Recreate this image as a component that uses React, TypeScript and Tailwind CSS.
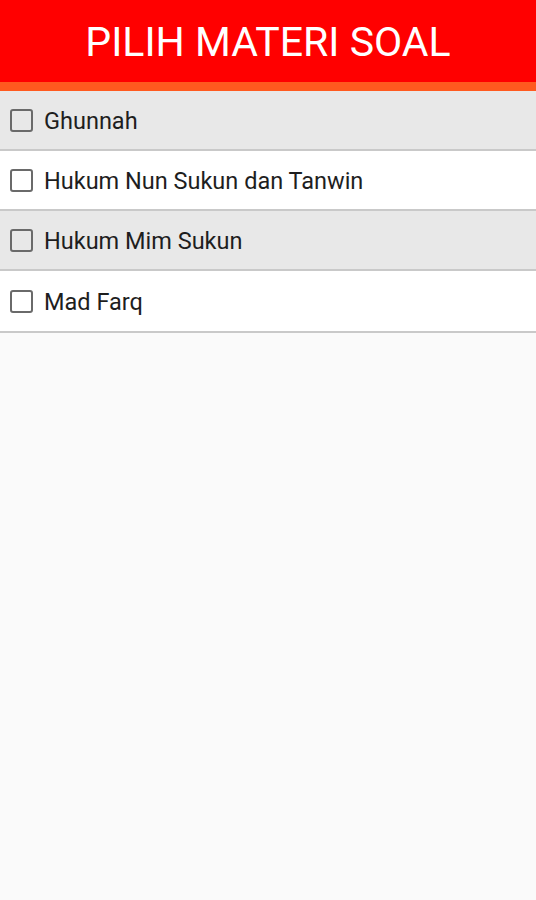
const TOPICS = ['Ghunnah', 'Hukum Nun Sukun dan Tanwin', 'Hukum Mim Sukun', 'Mad Farq'];

export default function App() {
  return (
    <div className="min-h-[900px] bg-[#fafafa]" style={{ fontFamily: 'Roboto, "Noto Sans", sans-serif' }}>
      {/* header */}
      <div className="h-[82px] bg-[#ff0000] flex items-center justify-center pt-[2px]">
        <h1 className="text-white text-[41px] leading-none">PILIH MATERI SOAL</h1>
      </div>
      <div className="h-[9px] bg-[#ff5a1f]" />

      {/* list */}
      <div>
        {TOPICS.map((t, i) => (
          <label
            key={t}
            className={`flex items-center border-b-2 border-[#c9c9c9] pl-[10px] ${
              i === TOPICS.length - 1 ? 'h-[62px]' : 'h-[60px]'
            } ${i % 2 === 0 ? 'bg-[#e8e8e8]' : 'bg-white'}`}
          >
            <span className="w-[23px] h-[23px] border-2 border-[#6a6a6a] rounded-[3px] shrink-0" />
            <span className="ml-[11px] text-[23.5px] leading-none text-[#1e1e1e] pt-[3px]">{t}</span>
          </label>
        ))}
      </div>
    </div>
  );
}
